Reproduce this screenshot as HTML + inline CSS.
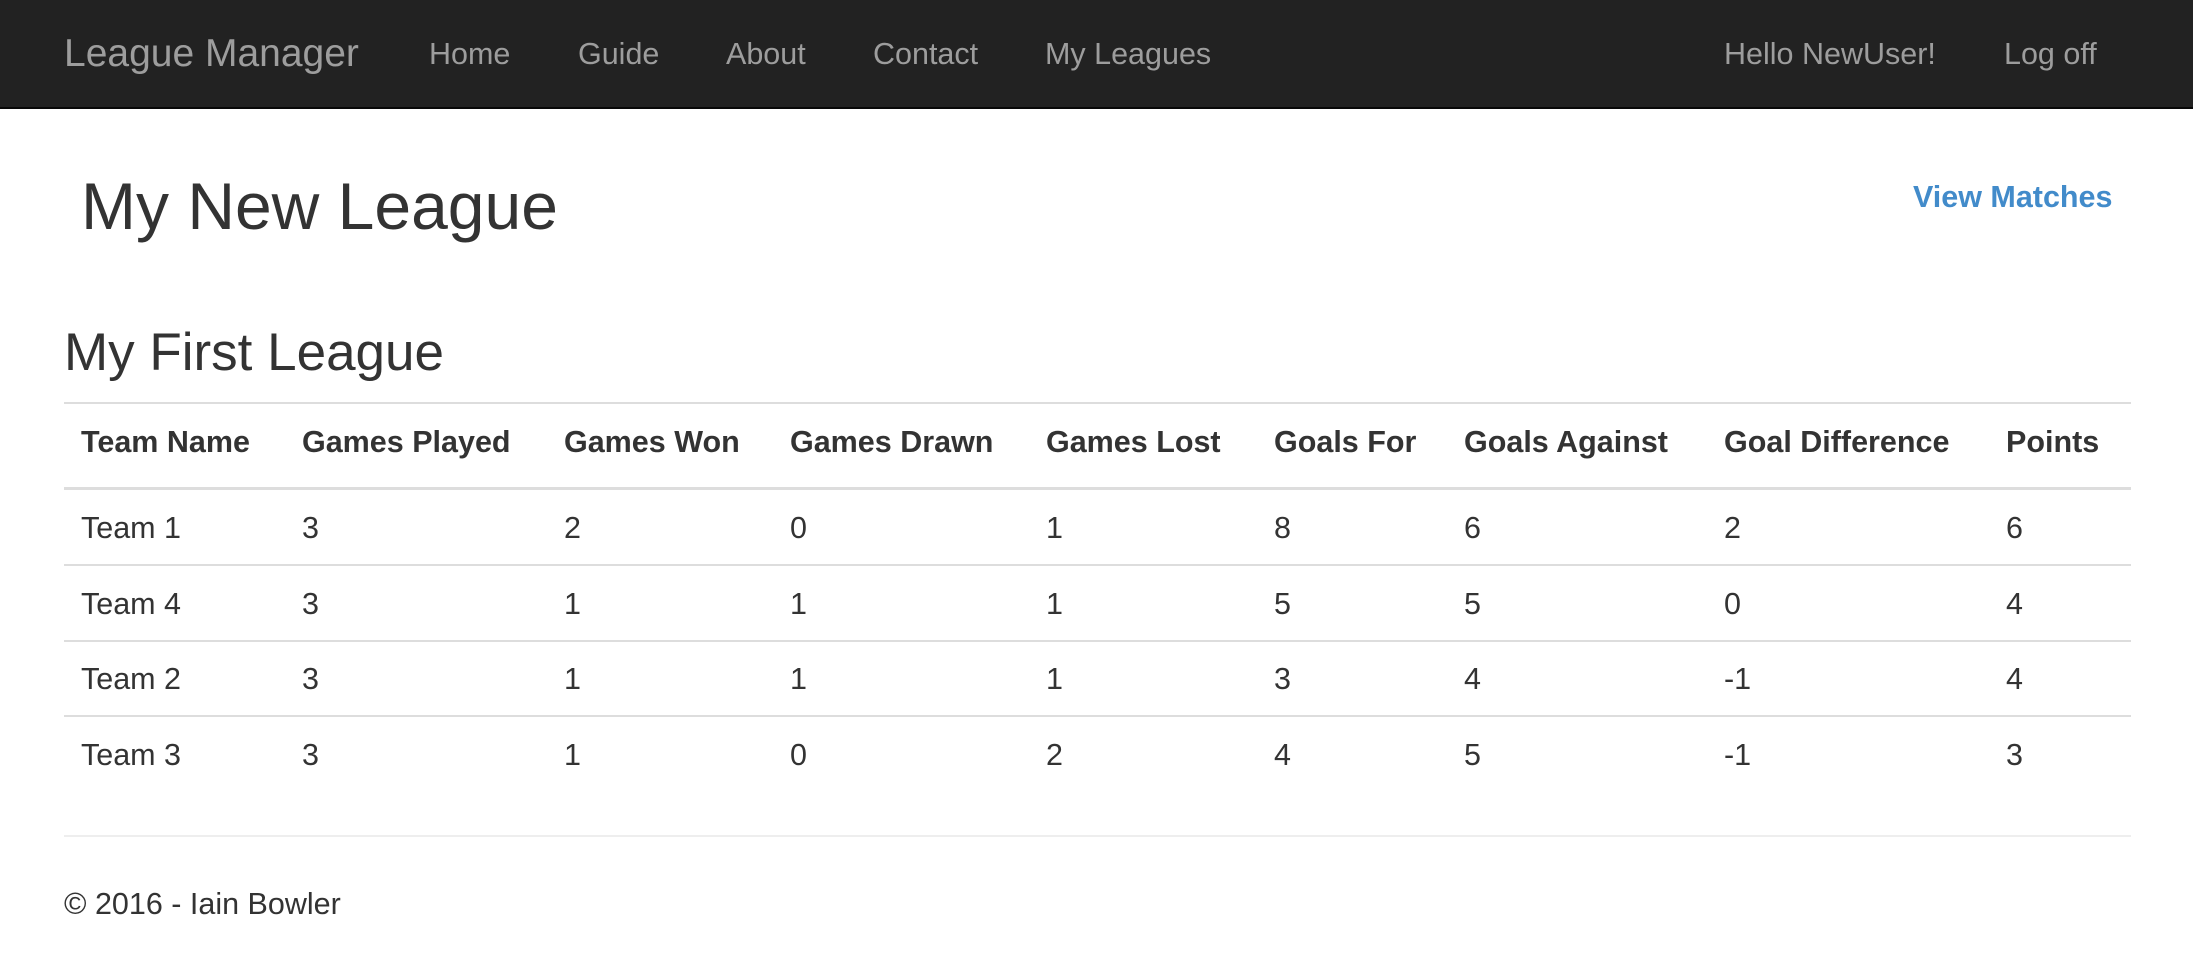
<!DOCTYPE html>
<html><head><meta charset="utf-8"><style>
*{margin:0;padding:0;box-sizing:border-box}
body{width:2193px;height:964px;background:#fff;font-family:"Liberation Sans",Arial,sans-serif;color:#333;position:relative;overflow:hidden}
.nav{position:absolute;left:0;top:0;width:2193px;height:109px;background:#222;border-bottom:2px solid #080808}
.a{position:absolute;white-space:nowrap;line-height:1}
.n{color:#9d9d9d;font-size:30.5px;top:39px}
.hl{position:absolute;left:64px;width:2067px;height:2px;background:#ddd}
.c{font-size:30.5px}
.h{font-size:30.5px;font-weight:bold}
</style></head><body>
<div class="nav">
<div class="a" style="left:64px;top:34px;font-size:39px;color:#9d9d9d">League Manager</div>
<div class="a n" style="left:429px">Home</div>
<div class="a n" style="left:578px">Guide</div>
<div class="a n" style="left:726px">About</div>
<div class="a n" style="left:873px">Contact</div>
<div class="a n" style="left:1045px">My Leagues</div>
<div class="a n" style="left:1724px">Hello NewUser!</div>
<div class="a n" style="left:2004px">Log off</div>
</div>
<div class="a" style="left:81px;top:173px;font-size:66px">My New League</div>
<div class="a" style="left:1913px;top:182px;font-size:30.5px;font-weight:bold;color:#428bca">View Matches</div>
<div class="a" style="left:64px;top:326px;font-size:53px">My First League</div>
<div class="hl" style="top:402px"></div>
<div class="hl" style="top:487px;height:3px"></div>
<div class="hl" style="top:564px"></div>
<div class="hl" style="top:640px"></div>
<div class="hl" style="top:715px"></div>
<div class="hl" style="top:835px;background:#eee"></div>
<div id="t"></div>
<div class="a c" style="left:64px;top:889px">© 2016 - Iain Bowler</div>
<script>
var xs=[81,302,564,790,1046,1274,1464,1724,2006];
var hd=["Team Name","Games Played","Games Won","Games Drawn","Games Lost","Goals For","Goals Against","Goal Difference","Points"];
var rows=[["Team 1",3,2,0,1,8,6,2,6],["Team 4",3,1,1,1,5,5,0,4],["Team 2",3,1,1,1,3,4,-1,4],["Team 3",3,1,0,2,4,5,-1,3]];
var ys=[528,604,679,755],h="";
hd.forEach(function(t,i){h+='<div class="a h" style="left:'+xs[i]+'px;top:'+(442-15)+'px">'+t+'</div>'});
rows.forEach(function(r,j){r.forEach(function(t,i){h+='<div class="a c" style="left:'+xs[i]+'px;top:'+(ys[j]-15)+'px">'+t+'</div>'})});
document.getElementById('t').innerHTML=h;
</script>
</body></html>
